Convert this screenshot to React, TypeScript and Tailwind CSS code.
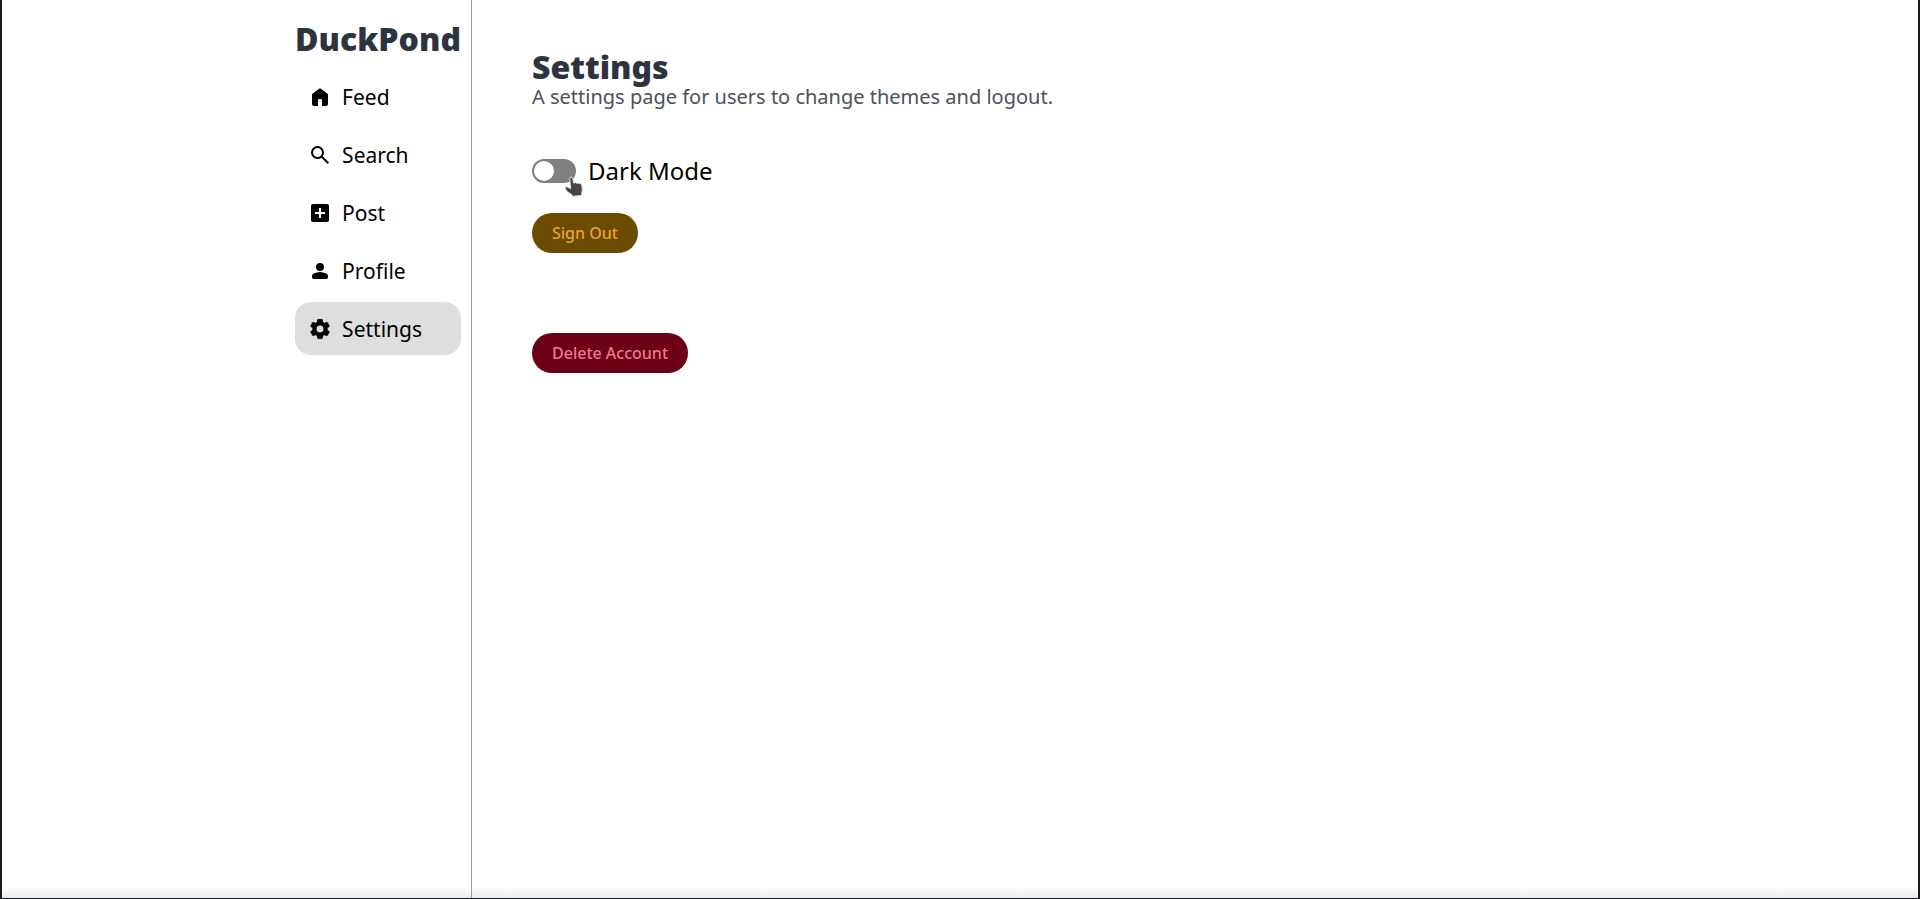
import { useState } from "react";
import type { ReactNode } from "react";

function Icon({ children }: { children: ReactNode }) {
  return (
    <svg viewBox="0 0 24 24" className="size-6 shrink-0 fill-current" aria-hidden="true">
      {children}
    </svg>
  );
}

const links = [
  { label: "Feed", icon: <path d="M6 21q-.825 0-1.412-.587T4 19v-9q0-.475.213-.9t.587-.7l6-4.5q.275-.2.575-.3T12 3.5t.625.1t.575.3l6 4.5q.375.275.588.7T20 10v9q0 .825-.587 1.413T18 21h-3q-.425 0-.712-.288T14 20v-5q0-.425-.288-.712T13 14h-2q-.425 0-.712.288T10 15v5q0 .425-.288.713T9 21z" /> },
  { label: "Search", icon: <path d="M9.500 16q-2.725 0-4.612-1.888T3 9.500t1.888-4.612T9.500 3t4.613 1.888T16 9.500q0 1.100-.35 2.075T14.700 13.300l6.300 6.300-1.400 1.400-6.300-6.300q-.75.600-1.725.950T9.500 16zm0-2q1.875 0 3.188-1.312T14 9.500t-1.312-3.187T9.500 5 6.313 6.313 5 9.500t1.313 3.188T9.500 14z" /> },
  { label: "Post", icon: <path d="M11 17h2v-4h4v-2h-4V7h-2v4H7v2h4zM5 21q-.825 0-1.412-.587T3 19V5q0-.825.588-1.412T5 3h14q.825 0 1.413.588T21 5v14q0 .825-.587 1.413T19 21z" /> },
  { label: "Profile", icon: <path d="M12 12a4 4 0 1 0 0-8 4 4 0 0 0 0 8zM6 20q-.825 0-1.412-.587T4 18v-.8q0-.85.438-1.562T5.600 14.550q1.550-.775 3.150-1.162T12 13t3.250.388 3.150 1.162q.725.375 1.163 1.088T20 17.200v.8q0 .825-.587 1.413T18 20z" /> },
  { label: "Settings", icon: <path stroke="currentColor" strokeWidth="0.8" strokeLinejoin="round" d="M19.140 12.940c.04-.3.060-.61.060-.94s-.02-.64-.07-.94l2.030-1.580a.49.49 0 0 0 .12-.61l-1.920-3.320a.488.488 0 0 0-.59-.22l-2.390.96c-.5-.38-1.030-.7-1.620-.94l-.36-2.540a.484.484 0 0 0-.48-.41h-3.840c-.24 0-.43.170-.47.410l-.36 2.540c-.59.240-1.130.570-1.620.940l-2.390-.96c-.22-.08-.47 0-.59.220L2.740 8.870c-.12.210-.08.470.12.610l2.030 1.580c-.05.300-.09.630-.09.940s.02.640.070.940l-2.030 1.580a.49.49 0 0 0-.12.610l1.920 3.320c.12.220.370.290.590.220l2.390-.96c.5.380 1.030.700 1.620.940l.36 2.540c.05.240.24.410.48.410h3.840c.24 0 .44-.17.470-.41l.36-2.540c.59-.24 1.130-.56 1.620-.94l2.390.96c.22.080.470 0 .59-.22l1.920-3.320c.12-.22.070-.47-.12-.61l-2.010-1.580zM12 15.900A3.900 3.900 0 0 1 8.100 12c0-2.150 1.750-3.900 3.900-3.900s3.900 1.750 3.900 3.900-1.750 3.900-3.900 3.900z" /> },
];

export default function App() {
  const [dark, setDark] = useState(false);
  return (
    <div className="flex min-h-screen border-x-2 border-b border-[#161a1c] bg-white bg-linear-to-t from-[#ebeded] to-white to-[12px] font-['Noto_Sans',sans-serif] text-black">
      <aside className="flex w-[30%] max-w-[470px] shrink-0 justify-end border-r border-[#9c9c9c] px-[10px]">
        <nav className="flex flex-col gap-[5px]" aria-label="Main">
          <h1 className="mb-[2px] pt-[15px] text-[32px] leading-[48px] font-black text-[#2d343f]">DuckPond</h1>
          {links.map(({ label, icon }) => (
            <a
              key={label}
              href="#"
              aria-current={label === "Settings" ? "page" : undefined}
              className="flex h-[53px] items-center gap-[10px] rounded-2xl px-[13px] text-[21px] leading-[30px] aria-[current=page]:bg-[#dedede]"
            >
              <Icon>{icon}</Icon>
              {label}
            </a>
          ))}
        </nav>
      </aside>
      <main className="flex flex-1 flex-col items-start px-[60px] pt-[50px]">
        <h2 className="text-[32px] leading-[34px] font-black text-[#2d343f]">Settings</h2>
        <p className="text-xl leading-[26px] text-[#4b525c]">A settings page for users to change themes and logout.</p>
        <label className="relative mt-10 flex items-center gap-3 text-2xl leading-[41px]">
          <input
            type="checkbox"
            role="switch"
            checked={dark}
            onChange={() => setDark(!dark)}
            className="flex h-6 w-11 cursor-pointer appearance-none items-center rounded-full bg-[#808080] px-[2px] before:size-5 before:rounded-full before:bg-white checked:justify-end"
          />
          Dark Mode
          <svg viewBox="0 0 20 22" className="absolute top-[26px] left-8 h-[22px] w-5" aria-hidden="true">
            <path d="M5.800 2.600Q5.700 1 7 1t1.600 1.400L9.800 7.200l1.500-.6 1.300.7 1.400-.4 1.300.8 1.300-.2 1.200 1.500.5 4.500L17.500 19.500 8.800 20.300 7.500 18.300 3.300 15.800 1 11.900q.4-1.600 2.200-1L6.600 12.700z" fill="#454545" stroke="#dedede" strokeWidth="1" strokeLinejoin="round" />
          </svg>
        </label>
        <button type="button" className="mt-[22px] h-10 rounded-full bg-[#6b4b00] px-5 text-base font-medium text-[#e9a427]">
          Sign Out
        </button>
        <button type="button" className="mt-20 h-10 rounded-full bg-[#6b0016] px-5 text-base font-medium text-[#f4758f]">
          Delete Account
        </button>
      </main>
    </div>
  );
}
